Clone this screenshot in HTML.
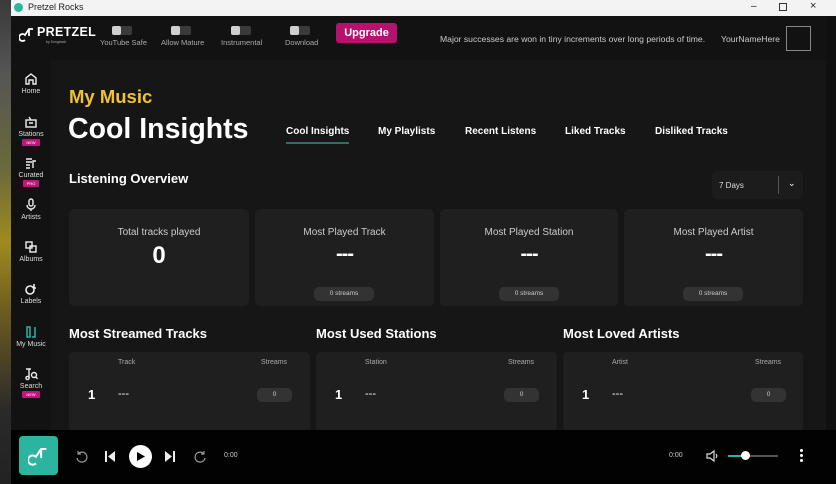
<!DOCTYPE html>
<html><head><meta charset="utf-8"><style>
*{box-sizing:border-box;margin:0;padding:0}
body{width:836px;height:484px;overflow:hidden;background:#141414;font-family:"Liberation Sans",sans-serif;color:#fff;position:relative}
.abs{position:absolute}
.strip{left:0;top:0;width:11px;height:484px;background:linear-gradient(#3a3a3a 0%,#555 15%,#6a6a3a 35%,#a08a20 50%,#6b5a20 65%,#2a2a2a 85%,#222 100%)}
.title{left:11px;top:0;width:825px;height:16px;background:#f3f3f3;color:#222;font-size:9px}
.hdr{left:11px;top:16px;width:825px;height:44px;background:#121212}
.side{left:11px;top:60px;width:40px;height:370px;background:#121212}
.main{left:51px;top:60px;width:775px;height:370px;background:#161616}
.scroll{left:826px;top:16px;width:10px;height:414px;background:#101010}
.tog{width:20px;height:9px;border-radius:2px;background:#3a3a3a}
.tog:before{content:"";display:block;width:9px;height:9px;border-radius:2px;background:#cfcfcf}
.tl{font-size:7.5px;color:#aaa}
.navi{position:absolute;width:40px;text-align:center;font-size:7px;color:#ddd}
.badge{display:inline-block;background:#c0167a;color:#fff;font-size:4px;padding:1px 4px;border-radius:1px;margin-top:1px}
.card{position:absolute;background:#1f1f1f;border-radius:5px}
.ct{position:absolute;width:100%;text-align:center;font-size:10px;color:#ccc}
.pill{position:absolute;background:#333;border-radius:5px;font-size:6.5px;color:#ccc;text-align:center}
.h2{position:absolute;font-size:13px;font-weight:bold}
.tab{position:absolute;top:126px;font-size:10px;font-weight:bold}
.player{left:11px;top:430px;width:825px;height:54px;background:#020202}
.dash{position:absolute;width:100%;text-align:center;top:34px;font-size:20px;font-weight:bold;color:#fff;letter-spacing:-1px}
</style></head><body>
<div class="abs strip"></div>
<div class="abs title"><div class="abs" style="left:3px;top:3px;width:9px;height:9px;border-radius:50%;background:#2bb4a0"></div><div class="abs" style="left:17px;top:2px">Pretzel Rocks</div>
<div class="abs" style="left:740px;top:1px;font-size:10px">–</div><div class="abs" style="left:768px;top:3px;width:8px;height:8px;border:1px solid #333"></div><div class="abs" style="left:799px;top:0px;font-size:11px">×</div></div>
<div class="abs hdr">
<svg class="abs" style="left:8px;top:10px" width="16" height="16" viewBox="0 0 16 16" fill="none" stroke="#fff" stroke-width="1.8"><path d="M6 14a3.5 3.5 0 1 1 0-5l4-6h4"/><path d="M10 3v7"/></svg>
<div class="abs" style="left:26px;top:9px;font-size:12.5px;font-weight:bold;letter-spacing:.3px">PRETZEL</div>
<div class="abs" style="left:35px;top:24px;font-size:3.5px;color:#aaa">by Songtradr</div>
<div class="abs tog" style="left:101px;top:10px"></div><div class="abs tl" style="left:89px;top:22px">YouTube Safe</div>
<div class="abs tog" style="left:160px;top:10px"></div><div class="abs tl" style="left:150px;top:22px">Allow Mature</div>
<div class="abs tog" style="left:220px;top:10px"></div><div class="abs tl" style="left:210px;top:22px">Instrumental</div>
<div class="abs tog" style="left:279px;top:10px"></div><div class="abs tl" style="left:274px;top:22px">Download</div>
<div class="abs" style="left:325px;top:7px;width:61px;height:20px;background:#b5126f;border-radius:3px;font-size:11px;font-weight:bold;text-align:center;line-height:20px">Upgrade</div>
<div class="abs" style="left:429px;top:18px;font-size:8.6px;color:#ccc">Major successes are won in tiny increments over long periods of time.</div>
<div class="abs" style="left:710px;top:18px;font-size:8.6px;color:#ccc">YourNameHere</div>
<div class="abs" style="left:775px;top:10px;width:25px;height:25px;border:1px solid #888"></div>
</div>
<div class="abs side">
<div class="navi" style="top:12px"><svg width="14" height="14" viewBox="0 0 14 14" fill="none" stroke="#eee" stroke-width="1.4"><path d="M2 12V6l5-4 5 4v6H9V8H5v4z"/></svg><br>Home</div>
<div class="navi" style="top:55px"><svg width="14" height="14" viewBox="0 0 14 14" fill="none" stroke="#eee" stroke-width="1.4"><rect x="2" y="5" width="10" height="7"/><path d="M5 2l2 3M5 8h4"/></svg><br>Stations<br><span class="badge">NEW</span></div>
<div class="navi" style="top:96px"><svg width="14" height="14" viewBox="0 0 14 14" fill="none" stroke="#eee" stroke-width="1.4"><path d="M2 3h6M2 6h6M2 9h4M2 12h4M9 12V5h3"/></svg><br>Curated<br><span class="badge">PRO</span></div>
<div class="navi" style="top:138px"><svg width="14" height="14" viewBox="0 0 14 14" fill="none" stroke="#eee" stroke-width="1.4"><rect x="5" y="1" width="4" height="7" rx="2"/><path d="M3 7a4 4 0 0 0 8 0M7 11v2"/></svg><br>Artists</div>
<div class="navi" style="top:180px"><svg width="14" height="14" viewBox="0 0 14 14" fill="none" stroke="#eee" stroke-width="1.4"><rect x="2" y="2" width="6" height="6"/><rect x="6" y="6" width="6" height="6"/></svg><br>Albums</div>
<div class="navi" style="top:222px"><svg width="14" height="14" viewBox="0 0 14 14" fill="none" stroke="#eee" stroke-width="1.6"><circle cx="6" cy="8" r="4"/><path d="M10 2v4h2"/></svg><br>Labels</div>
<div class="navi" style="top:265px;color:#ddd"><svg width="14" height="14" viewBox="0 0 14 14" fill="none" stroke="#2bb4a0" stroke-width="1.5"><path d="M3 2v10h3V2zM8 12h3V2"/></svg><br>My Music</div>
<div class="navi" style="top:307px"><svg width="14" height="14" viewBox="0 0 14 14" fill="none" stroke="#eee" stroke-width="1.4"><path d="M2 2h5M5 2v9"/><circle cx="3.5" cy="11" r="1.6"/><circle cx="10" cy="8" r="2.5"/><path d="M11.7 9.8l1.8 2"/></svg><br>Search<br><span class="badge">NEW</span></div>
</div>
<div class="abs main"></div>
<div class="abs scroll"></div>
<div class="abs" style="left:69px;top:86px;font-size:18.5px;font-weight:bold;color:#f2c230">My Music</div>
<div class="abs" style="left:68px;top:113px;font-size:28.5px;font-weight:bold">Cool Insights</div>
<div class="tab" style="left:286px">Cool Insights</div><div class="abs" style="left:286px;top:142px;width:63px;height:2px;background:#2f6f66"></div>
<div class="tab" style="left:378px">My Playlists</div>
<div class="tab" style="left:465px">Recent Listens</div>
<div class="tab" style="left:565px">Liked Tracks</div>
<div class="tab" style="left:655px">Disliked Tracks</div>
<div class="h2" style="left:69px;top:171px">Listening Overview</div>
<div class="card" style="left:712px;top:171px;width:91px;height:28px;background:#1c1c1c"><div class="abs" style="left:7px;top:10px;font-size:8px;color:#ddd">7 Days</div><div class="abs" style="left:66px;top:5px;width:1px;height:18px;background:#555"></div><div class="abs" style="left:76px;top:7px;font-size:9px">⌄</div></div>
<div class="card" style="left:69px;top:209px;width:180px;height:97px"><div class="ct" style="top:18px">Total tracks played</div><div class="ct" style="top:33px;font-size:24px;font-weight:bold;color:#fff">0</div></div>
<div class="card" style="left:255px;top:209px;width:179px;height:97px"><div class="ct" style="top:18px">Most Played Track</div><div class="dash">---</div><div class="pill" style="left:59px;top:78px;width:60px;height:14px;line-height:14px">0 streams</div></div>
<div class="card" style="left:440px;top:209px;width:178px;height:97px"><div class="ct" style="top:18px">Most Played Station</div><div class="dash">---</div><div class="pill" style="left:59px;top:78px;width:60px;height:14px;line-height:14px">0 streams</div></div>
<div class="card" style="left:624px;top:209px;width:179px;height:97px"><div class="ct" style="top:18px">Most Played Artist</div><div class="dash">---</div><div class="pill" style="left:59px;top:78px;width:60px;height:14px;line-height:14px">0 streams</div></div>
<div class="h2" style="left:69px;top:326px">Most Streamed Tracks</div>
<div class="h2" style="left:316px;top:326px">Most Used Stations</div>
<div class="h2" style="left:563px;top:326px">Most Loved Artists</div>
<div class="card" style="left:69px;top:352px;width:241px;height:80px"><div class="abs" style="left:49px;top:7px;font-size:7px;color:#aaa">Track</div><div class="abs" style="left:192px;top:7px;font-size:7px;color:#aaa">Streams</div><div class="abs" style="left:19px;top:35px;font-size:13px;font-weight:bold">1</div><div class="abs" style="left:49px;top:36px;font-size:11px">---</div><div class="pill" style="left:188px;top:36px;width:35px;height:14px;line-height:14px">0</div></div>
<div class="card" style="left:316px;top:352px;width:241px;height:80px"><div class="abs" style="left:49px;top:7px;font-size:7px;color:#aaa">Station</div><div class="abs" style="left:192px;top:7px;font-size:7px;color:#aaa">Streams</div><div class="abs" style="left:19px;top:35px;font-size:13px;font-weight:bold">1</div><div class="abs" style="left:49px;top:36px;font-size:11px">---</div><div class="pill" style="left:188px;top:36px;width:35px;height:14px;line-height:14px">0</div></div>
<div class="card" style="left:563px;top:352px;width:240px;height:80px"><div class="abs" style="left:49px;top:7px;font-size:7px;color:#aaa">Artist</div><div class="abs" style="left:192px;top:7px;font-size:7px;color:#aaa">Streams</div><div class="abs" style="left:19px;top:35px;font-size:13px;font-weight:bold">1</div><div class="abs" style="left:49px;top:36px;font-size:11px">---</div><div class="pill" style="left:188px;top:36px;width:35px;height:14px;line-height:14px">0</div></div>
<div class="abs player">
<div class="abs" style="left:8px;top:6px;width:39px;height:39px;background:#2bb4a0;border-radius:4px"><svg class="abs" style="left:9px;top:9px" width="21" height="21" viewBox="0 0 16 16" fill="none" stroke="#fff" stroke-width="1.5"><path d="M6 14a3.5 3.5 0 1 1 0-5l4-6h4"/><path d="M10 3v7"/></svg></div>
<svg class="abs" style="left:64px;top:20px" width="13" height="13" viewBox="0 0 13 13" fill="none" stroke="#999" stroke-width="1.2"><path d="M3 4a5 5 0 1 1-1 4M3 1v3h3"/></svg>
<svg class="abs" style="left:93px;top:21px" width="12" height="11" viewBox="0 0 12 11"><rect x="1" y="0" width="2" height="11" fill="#eee"/><path d="M11 0v11L4 5.5z" fill="#eee"/></svg>
<div class="abs" style="left:118px;top:15px;width:23px;height:23px;border-radius:50%;background:#fff"></div><svg class="abs" style="left:126px;top:22px" width="8" height="9"><path d="M0 0v9l8-4.5z" fill="#000"/></svg>
<svg class="abs" style="left:153px;top:21px" width="12" height="11" viewBox="0 0 12 11"><rect x="9" y="0" width="2" height="11" fill="#eee"/><path d="M1 0v11l7-5.5z" fill="#eee"/></svg>
<svg class="abs" style="left:183px;top:20px" width="13" height="13" viewBox="0 0 13 13" fill="none" stroke="#999" stroke-width="1.2"><path d="M10 4a5 5 0 1 0 1 4M10 1v3H7"/></svg>
<div class="abs" style="left:213px;top:22px;font-size:7px;color:#ccc">0:00</div>
<div class="abs" style="left:658px;top:22px;font-size:7px;color:#ccc">0:00</div>
<svg class="abs" style="left:695px;top:20px" width="13" height="12" viewBox="0 0 13 12" fill="none" stroke="#ddd" stroke-width="1.2"><path d="M1 4h3l4-3v10L4 8H1z"/><path d="M10 4q1.5 2 0 4"/></svg>
<div class="abs" style="left:717px;top:25px;width:50px;height:2px;background:#555"></div><div class="abs" style="left:717px;top:25px;width:17px;height:2px;background:#2bb4a0"></div><div class="abs" style="left:730px;top:21px;width:9px;height:9px;border-radius:50%;background:#fff"></div>
<div class="abs" style="left:789px;top:19px;width:3px;height:3px;border-radius:50%;background:#fff;box-shadow:0 5px 0 #fff,0 10px 0 #fff"></div>
</div>
</body></html>
